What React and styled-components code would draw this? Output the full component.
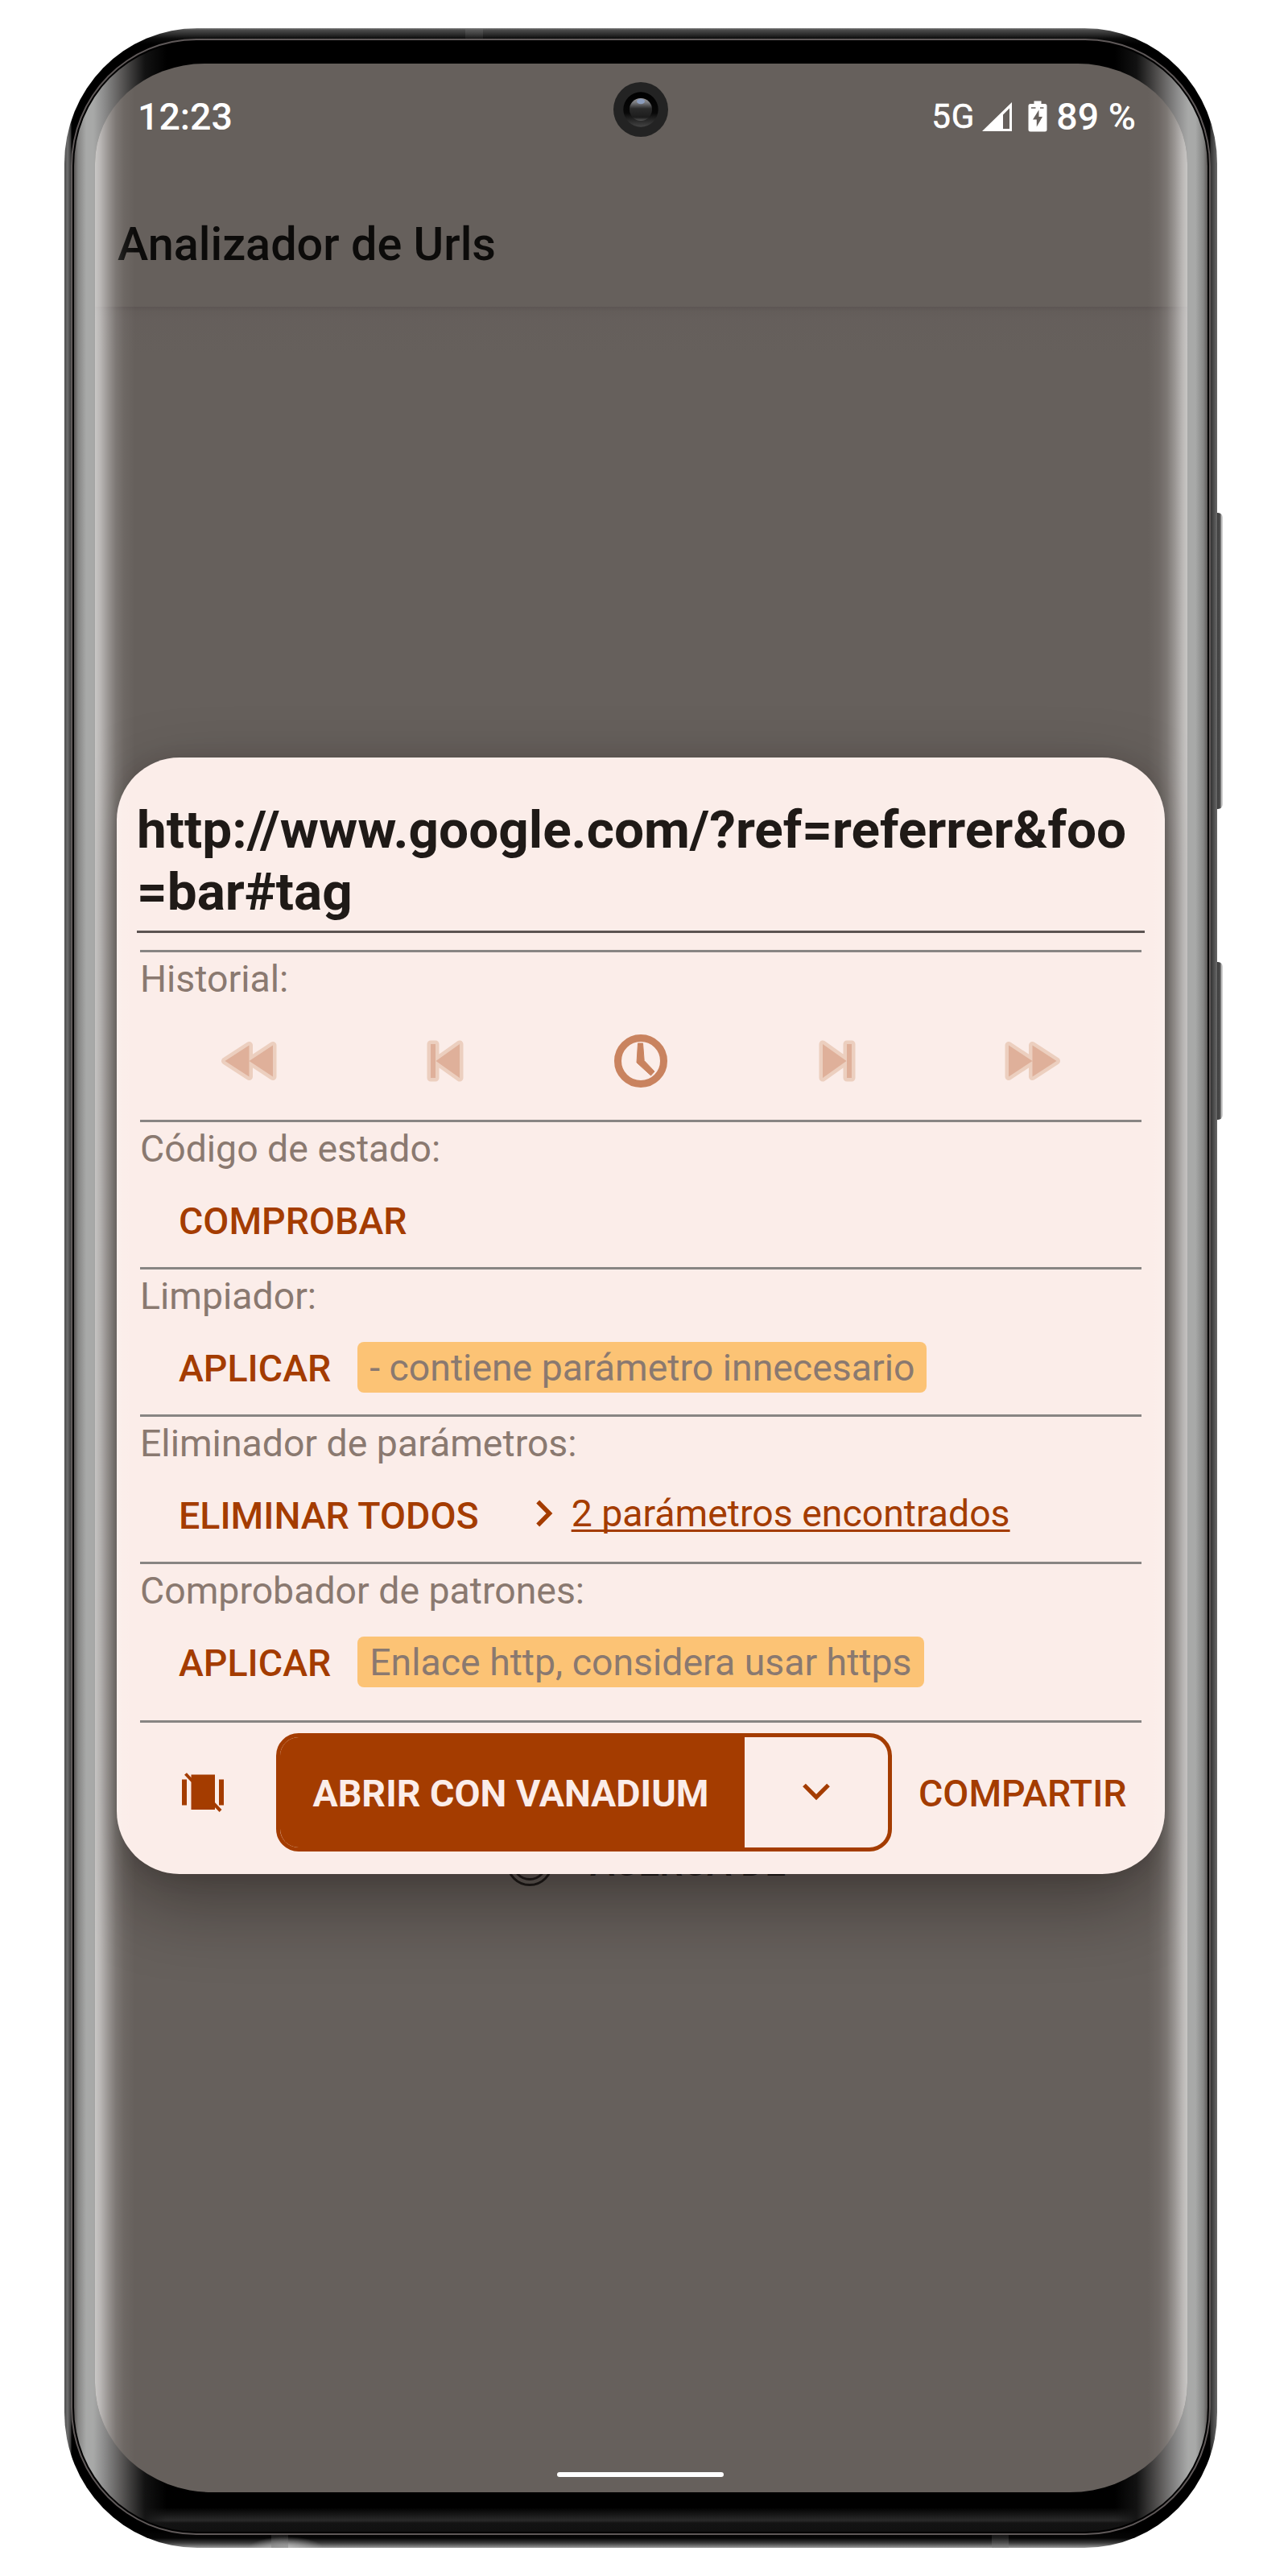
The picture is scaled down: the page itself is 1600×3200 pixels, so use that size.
import React from "react";
import styled, { createGlobalStyle } from "styled-components";

const ink = "#a43c00";
const surface = "#fbede9";
const scrim = "#66605c";

const Global = createGlobalStyle`
  html, body { margin: 0; padding: 0; background: #fff; }
  * { box-sizing: border-box; }
  body { font-family: Roboto, "Liberation Sans", sans-serif; }
  svg { display: block; flex: none; }
  button { appearance: none; border: 0; background: none; padding: 0; margin: 0; font: inherit; }
`;

/* ---------- device ---------- */

const Page = styled.div`
  width: 1600px;
  height: 3200px;
  padding: 35px 0 0 80px;
  overflow: hidden;
  background: #fff;
`;

const Body = styled.div`
  position: relative;
  width: 1432px;
  height: 3130px;
  padding: 13px 8px 16px;
  border-radius: 165px / 168px;
  background:
    linear-gradient(to right, #4c4c4c, #6e6e6e 4px, #3a3a3a 8px, transparent 9px) left / 50% 100% no-repeat,
    linear-gradient(to left, #6a6a6a, #555 3px, #333 8px, transparent 9px) right / 50% 100% no-repeat,
    linear-gradient(rgba(120, 120, 120, 0.35), rgba(120, 120, 120, 0.1)) 498px 0 / 22px 13px no-repeat,
    linear-gradient(rgba(120, 120, 120, 0.15), rgba(120, 120, 120, 0.45)) 257px 100% / 21px 16px no-repeat,
    linear-gradient(rgba(120, 120, 120, 0.15), rgba(120, 120, 120, 0.45)) 1152px 100% / 21px 16px no-repeat,
    radial-gradient(ellipse 46px 14px at 275px 100%, #bbb, transparent) no-repeat,
    linear-gradient(to bottom, #8a8a8a 0, #4d4d4d 2px, #2b2b2b 8px, #0c0c0c 13px, #000 20px, #000 3108px, #060606 3118px, #3c3c3c 3124px, #9a9a9a 3130px);
`;

const SideKey = styled.span`
  position: absolute;
  left: 1432px;
  top: ${(p) => p.$top}px;
  width: 7px;
  height: ${(p) => p.$height}px;
  border-radius: 0 6px 6px 0;
  background: linear-gradient(to right, #3c3c3c, #505050 4px, #b4b4b4 5px, #d8d8d8);
`;

const Ring = styled.div`
  height: 100%;
  padding: 2px;
  border: 2px solid #5f5959;
  border-radius: 156px / 158px;
  background: #000;
`;

const Glass = styled.div`
  height: 100%;
  padding: 27px 25px 49px 26px;
  border-radius: 152px / 154px;
  background:
    linear-gradient(to right, #5b5756, #858584 5px, #a8a9a8 15px, #a8a9a8 24px, #8f8f8f 36px, #5c5a59 58px, rgba(20, 20, 20, 0.9) 88px, transparent 115px) left / 50% 100% no-repeat,
    linear-gradient(to left, #5b5756, #858584 5px, #a8a9a8 15px, #a8a9a8 24px, #8f8f8f 36px, #5c5a59 58px, rgba(20, 20, 20, 0.9) 88px, transparent 115px) right / 50% 100% no-repeat,
    linear-gradient(to top, #111 0, #131313 11px, #2a2a2a 14px, #000 30px);
`;

const glare = "rgba(255, 255, 255, 0.65), rgba(255, 255, 255, 0.56) 6px, rgba(255, 255, 255, 0.34) 16px, rgba(255, 255, 255, 0.15) 26px, rgba(255, 255, 255, 0.05) 36px, rgba(255, 255, 255, 0) 50px";

const Screen = styled.div`
  position: relative;
  display: flex;
  flex-direction: column;
  height: 100%;
  overflow: hidden;
  border-radius: 136px 136px 146px 146px / 124px 124px 136px 136px;
  background: ${scrim};

  /* light caught by the curved edges of the glass */
  &::after {
    content: "";
    position: absolute;
    inset: 0;
    z-index: 2;
    pointer-events: none;
    background:
      linear-gradient(to right, ${glare}) left / 50% 100% no-repeat,
      linear-gradient(to left, ${glare}) right / 50% 100% no-repeat;
  }
`;

/* ---------- system bars ---------- */

const StatusBar = styled.div`
  display: flex;
  justify-content: space-between;
  align-items: center;
  height: 131px;
  padding: 0 64px 0 53px;
  color: #fff;
  font-size: 46.5px;
  font-weight: 500;
  line-height: 60px;
`;

const StatusIcons = styled.div`
  display: flex;
  align-items: center;
`;

const Network = styled.span`
  margin-right: 9px;
  font-size: 42px;
  font-weight: 400;
  letter-spacing: 1px;
  line-height: 56px;
  -webkit-text-stroke: 0.6px #fff;
`;

const Percent = styled.span`
  margin-left: 11px;
`;

const Camera = styled.svg`
  position: absolute;
  left: 644px;
  top: 23px;
`;

const HomePill = styled.div`
  position: absolute;
  left: 574px;
  bottom: 19px;
  width: 207px;
  height: 6px;
  border-radius: 3px;
  background: #fff;
`;

const Toolbar = styled.header`
  display: flex;
  align-items: center;
  height: 171px;
  padding: 16px 28px 0;
`;

const Title = styled.h1`
  margin: 0;
  color: #0c0b0a;
  font-size: 57.6px;
  font-weight: 500;
  line-height: 68px;
`;

const Main = styled.main`
  flex: 1;
  display: grid;
  grid-template-columns: 1fr;
  align-items: start;
  background: linear-gradient(rgba(70, 60, 62, 0.28), rgba(80, 70, 72, 0.12) 6px, rgba(90, 80, 85, 0.08) 16px, transparent 60px);
`;

const Underlay = styled.div`
  grid-area: 1 / 1;
  display: flex;
  align-items: center;
  gap: 46px;
  margin: 1903px 0 0 511px;
  color: #1b1918;
  font-size: 46px;
  font-weight: 500;
  line-height: 60px;
`;

/* ---------- dialog ---------- */

const Dialog = styled.section`
  grid-area: 1 / 1;
  z-index: 1;
  width: 1302px;
  height: 1387px;
  margin: 559.5px 0 0 27px;
  padding: 51px 25px 0;
  border-radius: 78px;
  background: ${surface};
  box-shadow: 0 36px 90px rgba(20, 12, 10, 0.42), 0 4px 24px rgba(20, 12, 10, 0.1);
`;

const UrlField = styled.div`
  height: 167px;
  border-bottom: 3px solid #5c5452;
  color: #1f1a17;
  font-size: 65.7px;
  font-weight: 700;
  line-height: 77.5px;
  white-space: nowrap;
`;

const Modules = styled.div`
  padding: 21px 4px 0;
`;

const Module = styled.section`
  height: ${(p) => p.$height}px;
  padding-top: 5px;
  border-top: 3px solid #888583;
`;

const Label = styled.h2`
  margin: 0 0 14px;
  color: #8a7970;
  font-size: 46.4px;
  font-weight: 400;
  line-height: 56px;
  white-space: nowrap;
`;

const Row = styled.div`
  display: flex;
  align-items: center;
  height: 96px;
  padding-left: 48px;
`;

const TextButton = styled.button`
  color: ${ink};
  font-size: 46.5px;
  font-weight: 500;
  line-height: 60px;
  white-space: nowrap;
`;

const Chip = styled.span`
  display: block;
  height: 63px;
  margin: 0 0 3px 33px;
  padding: 4px 15px 0;
  border-radius: 8px;
  background: #fcc375;
  color: #8a7970;
  font-size: 46.4px;
  line-height: 56px;
  white-space: nowrap;
`;

const Expander = styled.button`
  display: flex;
  align-items: center;
  gap: 23px;
  margin: 0 0 6px 71px;
  color: ${ink};
  font-size: 46.4px;
  line-height: 60px;
`;

const ExpanderText = styled.span`
  text-decoration: underline;
  text-decoration-thickness: 2.6px;
  text-underline-offset: 4px;
  text-decoration-skip-ink: none;
  white-space: nowrap;
`;

const HistoryRow = styled.div`
  display: grid;
  grid-template-columns: repeat(5, 243.5px);
  justify-content: center;
  align-items: center;
  height: 121px;
`;

const HistoryButton = styled.button`
  display: flex;
  justify-content: center;
`;

const Footer = styled.footer`
  display: flex;
  align-items: center;
  padding: 13px 0 0 52px;
  border-top: 3px solid #888583;
`;

const OpenGroup = styled.div`
  display: flex;
  width: 765px;
  height: 147px;
  margin: 0 33px 0 64px;
  overflow: hidden;
  border: 5px solid ${ink};
  border-radius: 28px;
`;

const OpenButton = styled.button`
  width: 577px;
  padding: 3px 4px 0 0;
  background: ${ink};
  color: ${surface};
  font-size: 46.5px;
  font-weight: 700;
  white-space: nowrap;
`;

const MoreButton = styled.button`
  flex: 1;
  display: flex;
  align-items: center;
  justify-content: center;
`;

const ShareButton = styled(TextButton)`
  padding-top: 3px;
`;

/* ---------- drawings ---------- */

const Signal = () => (
  <svg width="38" height="38" viewBox="0 0 38 38">
    <path fill="#fff" fillRule="evenodd" d="M37 1V37H0ZM26 16.5V34H34V8.5Z" />
  </svg>
);

const BatteryIcon = styled.svg`
  margin-left: 19px;
`;

const Battery = () => (
  <BatteryIcon width="24" height="39" viewBox="0 0 24 39">
    <path
      fill="#fff"
      fillRule="evenodd"
      d="M7.500.5H16.500V4H21Q23.500 4 23.500 6.500V36Q23.500 38.500 21 38.500H3Q.5 38.500 .5 36V6.500Q.5 4 3 4H7.500ZM13.500 11.500 6 23.500H10.800V32.500L18 20H13.500Z"
    />
    <path stroke={scrim} strokeWidth="1.500" d="M4 9H9.500M15 9H19.500" />
  </BatteryIcon>
);

const FrontCamera = () => (
  <Camera width="68" height="68" viewBox="0 0 68 68">
    <defs>
      <linearGradient id="well" x1="0" y1="0" x2="0" y2="1">
        <stop offset="0" stopColor="#000" />
        <stop offset=".6" stopColor="#080808" />
        <stop offset="1" stopColor="#444" />
      </linearGradient>
      <linearGradient id="lens" x1="0" y1="0" x2="0" y2="1">
        <stop offset="0" stopColor="#9a999c" />
        <stop offset=".2" stopColor="#77787c" />
        <stop offset=".46" stopColor="#2a2a2a" />
        <stop offset=".85" stopColor="#1c1c1c" />
        <stop offset="1" stopColor="#555" />
      </linearGradient>
    </defs>
    <circle cx="34" cy="34" r="34" fill="#232323" />
    <circle cx="34" cy="34" r="21.700" fill="url(#well)" />
    <circle cx="34" cy="34" r="14" fill="url(#lens)" />
    <ellipse cx="34" cy="24" rx="5" ry="3.300" fill="#8b9cbc" />
  </Camera>
);

const Duo = ({ width, d }) => (
  <svg width={width} height="62" viewBox={`0 0 ${width} 62`} strokeLinejoin="round">
    <path d={d} fill="#eccfbf" stroke="#eccfbf" strokeWidth="9" />
    <path d={d} fill="#dfb09a" />
  </svg>
);

const First = () => <Duo width={70} d="M5.500 31 35.500 11.500V50.500ZM35.500 31 65 11.500V50.500Z" />;
const Last = () => <Duo width={70} d="M64.500 31 34.500 11.500V50.500ZM34.500 31 5 11.500V50.500Z" />;
const Previous = () => <Duo width={46} d="M5 10H11V52H5ZM11.500 31 41 10V52Z" />;
const Next = () => <Duo width={46} d="M35 10H41V52H35ZM34.500 31 5 10V52Z" />;

const Clock = () => (
  <svg width="68" height="68" viewBox="0 0 68 68">
    <circle cx="34" cy="34" r="28.500" fill="none" stroke="#c9835f" strokeWidth="9" />
    <path fill="#c9835f" stroke="#c9835f" strokeWidth="1" strokeLinejoin="round" d="M30.500 12H36.500L38.200 33.500 51 47 46.500 52 29 36Z" />
  </svg>
);

const ChevronRight = () => (
  <svg width="21" height="34" viewBox="0 0 21 34" fill="none" stroke={ink} strokeWidth="5.500">
    <path d="M2.200 2.500 16.500 17 2.200 31.500" />
  </svg>
);

const ChevronDown = () => (
  <svg width="34" height="22" viewBox="0 0 34 22" fill="none" stroke={ink} strokeWidth="5.300">
    <path d="M2 2.500 17 17.500 32 2.500" />
  </svg>
);

const Carousel = () => (
  <svg width="53" height="49" viewBox="0 0 53 49" fill={ink}>
    <path d="M0 8.500H6V40.500H0ZM46 8.500H52V40.500H46ZM11.500 2.500H41V46H11.500Z" />
    <path stroke={ink} strokeWidth="4" fill="none" d="M4.500 1.500 13 10.500M39 38 48 47.500" />
  </svg>
);

const Target = () => (
  <svg width="58" height="58" viewBox="0 0 58 58" fill="none" stroke="#1b1918" strokeWidth="3">
    <circle cx="29" cy="29" r="27.500" />
    <circle cx="29" cy="29" r="20.500" />
    <circle cx="29" cy="29" r="9" />
  </svg>
);

const history = [First, Previous, Clock, Next, Last];

export default function App() {
  return (
    <>
      <Global />
      <Page>
        <Body>
          <SideKey $top={602} $height={368} />
          <SideKey $top={1160} $height={196} />
          <Ring>
            <Glass>
              <Screen>
                <StatusBar>
                  <span>12:23</span>
                  <StatusIcons>
                    <Network>5G</Network>
                    <Signal />
                    <Battery />
                    <Percent>89 %</Percent>
                  </StatusIcons>
                </StatusBar>
                <Toolbar>
                  <Title>Analizador de Urls</Title>
                </Toolbar>
                <Main>
                  <Underlay>
                    <Target />
                    <span>ACERCA DE</span>
                  </Underlay>
                  <Dialog>
                    <UrlField>
                      http://www.google.com/?ref=referrer&amp;foo
                      <br />
                      =bar#tag
                    </UrlField>
                    <Modules>
                      <Module $height={211}>
                        <Label>Historial:</Label>
                        <HistoryRow>
                          {history.map((Icon, i) => (
                            <HistoryButton key={i}>
                              <Icon />
                            </HistoryButton>
                          ))}
                        </HistoryRow>
                      </Module>
                      <Module $height={183}>
                        <Label>Código de estado:</Label>
                        <Row>
                          <TextButton>COMPROBAR</TextButton>
                        </Row>
                      </Module>
                      <Module $height={183}>
                        <Label>Limpiador:</Label>
                        <Row>
                          <TextButton>APLICAR</TextButton>
                          <Chip>- contiene parámetro innecesario</Chip>
                        </Row>
                      </Module>
                      <Module $height={183}>
                        <Label>Eliminador de parámetros:</Label>
                        <Row>
                          <TextButton>ELIMINAR TODOS</TextButton>
                          <Expander>
                            <ChevronRight />
                            <ExpanderText>2 parámetros encontrados</ExpanderText>
                          </Expander>
                        </Row>
                      </Module>
                      <Module $height={197}>
                        <Label>Comprobador de patrones:</Label>
                        <Row>
                          <TextButton>APLICAR</TextButton>
                          <Chip>Enlace http, considera usar https</Chip>
                        </Row>
                      </Module>
                      <Footer>
                        <Carousel />
                        <OpenGroup>
                          <OpenButton>ABRIR CON VANADIUM</OpenButton>
                          <MoreButton>
                            <ChevronDown />
                          </MoreButton>
                        </OpenGroup>
                        <ShareButton>COMPARTIR</ShareButton>
                      </Footer>
                    </Modules>
                  </Dialog>
                </Main>
                <FrontCamera />
                <HomePill />
              </Screen>
            </Glass>
          </Ring>
        </Body>
      </Page>
    </>
  );
}
